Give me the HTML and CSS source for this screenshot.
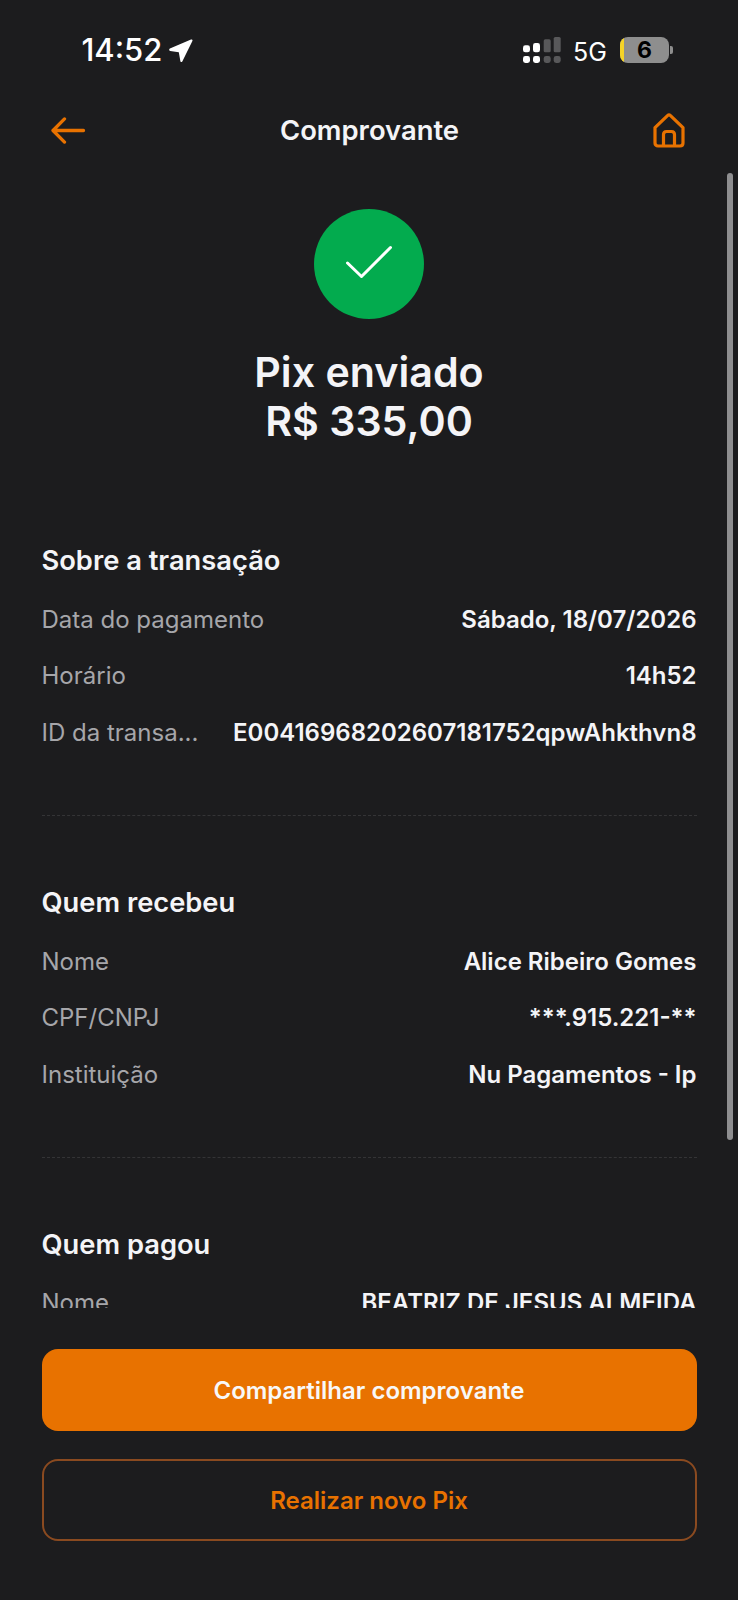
FILE: index.html
```html
<!DOCTYPE html>
<html lang="pt-BR">
<head>
<meta charset="utf-8">
<title>Comprovante</title>
<link rel="stylesheet" href="styles.css">
</head>
<body>
<div class="app">
  <div class="status">
    <div class="status-left">
      <span class="clock">14:52</span>
      <svg class="loc" viewBox="0 0 24 23"><path d="M.9 9.600 22 .5c1-.4 1.800.4 1.400 1.400L13.300 22.400c-.4 1-1.700.9-1.900-.2l-1.600-9L1.200 12C0 11.800-.2 10.200.9 9.600z" fill="#fff"/></svg>
    </div>
    <div class="status-right">
      <svg class="signal" viewBox="0 0 38 26">
        <g fill="#fff">
          <rect x="0" y="8.300" width="7" height="7" rx="2.400"/>
          <rect x="10" y="6" width="7" height="9.300" rx="2.400"/>
          <rect x="0" y="19" width="7" height="7" rx="2.400"/>
          <rect x="10" y="19" width="7" height="7" rx="2.400"/>
        </g>
        <g fill="#58585a">
          <rect x="20.700" y="2.300" width="7" height="13" rx="1.600"/>
          <rect x="30.700" y="0" width="7" height="15.300" rx="1.600"/>
          <rect x="20.700" y="19" width="7" height="7" rx="2.400"/>
          <rect x="30.700" y="19" width="7" height="7" rx="2.400"/>
        </g>
      </svg>
      <span class="net">5G</span>
      <div class="battery">
        <div class="battery-body"><span class="battery-level"></span><span class="battery-num">6</span></div>
        <span class="battery-tip"></span>
      </div>
    </div>
  </div>

  <header class="top">
    <svg class="back" viewBox="0 0 35 27" fill="none" stroke="#e87200" stroke-width="3.300" stroke-linecap="round" stroke-linejoin="round"><path d="M32.500 13.500H2M13.500 1.900 2 13.500l11.500 11.600"/></svg>
    <h1 class="top-title">Comprovante</h1>
    <svg class="home" viewBox="0 0 32 35" fill="none" stroke="#e87200" stroke-width="3.200" stroke-linejoin="round"><path d="M2 14.600 14.500 2.600c.9-.8 2.100-.8 3 0L30 14.600V30c0 1.900-1.200 3-3 3H5c-1.800 0-3-1.100-3-3z"/><path d="M10.500 33V21.600c0-2 1.300-3.100 3-3.100h5c1.700 0 3 1.100 3 3.100V33"/></svg>
  </header>

  <main class="scroll">
    <div class="hero">
      <div class="check">
        <svg class="check-mark" viewBox="0 0 48 35" fill="none" stroke="#fff" stroke-width="3" stroke-linecap="round" stroke-linejoin="round"><path d="M2.500 18 16.500 31.500 45.500 2.500"/></svg>
      </div>
      <h2 class="hero-title">Pix enviado<br>R$ 335,00</h2>
    </div>

    <section class="block">
      <h3 class="block-title">Sobre a transação</h3>
      <div class="row"><span class="label">Data do pagamento</span><span class="value">Sábado, 18/07/2026</span></div>
      <div class="row"><span class="label">Horário</span><span class="value">14h52</span></div>
      <div class="row"><span class="label">ID da transa...</span><span class="value">E00416968202607181752qpwAhkthvn8</span></div>
    </section>

    <section class="block">
      <h3 class="block-title">Quem recebeu</h3>
      <div class="row"><span class="label">Nome</span><span class="value">Alice Ribeiro Gomes</span></div>
      <div class="row"><span class="label">CPF/CNPJ</span><span class="value">***.915.221-**</span></div>
      <div class="row"><span class="label">Instituição</span><span class="value">Nu Pagamentos - Ip</span></div>
    </section>

    <section class="block">
      <h3 class="block-title">Quem pagou</h3>
      <div class="row"><span class="label">Nome</span><span class="value">BEATRIZ DE JESUS ALMEIDA</span></div>
    </section>
  </main>

  <footer class="actions">
    <button class="btn btn-primary">Compartilhar comprovante</button>
    <button class="btn btn-outline">Realizar novo Pix</button>
  </footer>

  <span class="thumb"></span>
</div>
</body>
</html>
```

FILE: styles.css
```css
* { box-sizing: border-box; margin: 0; padding: 0; }

html, body { background: #1c1c1e; }

body {
  font-family: Inter, "Liberation Sans", sans-serif;
  color: #f4f4f7;
}

.app {
  position: relative;
  width: 738px;
  height: 1600px;
  display: flex;
  flex-direction: column;
  overflow: hidden;
}

/* System status bar */
.status {
  height: 88px;
  flex: none;
  display: flex;
  justify-content: space-between;
  align-items: flex-start;
  padding: 37px 65px 0 81.500px;
}

.status-left { display: flex; align-items: center; gap: 7px; margin-top: -2px; }

.clock {
  font-size: 31px;
  line-height: 30px;
  font-weight: 500;
  color: #fff;
}

.loc { width: 24px; height: 23px; }

.status-right { display: flex; align-items: center; }

.signal { width: 38px; height: 26px; }

.net {
  margin-left: 12px;
  width: 34px;
  height: 26px;
  font-size: 25px;
  line-height: 30px;
  color: #fff;
}

.battery { margin-left: 13px; display: flex; align-items: center; gap: 1px; }

.battery-body {
  position: relative;
  width: 49px;
  height: 26px;
  border-radius: 8px;
  background: #8e8e8e;
  overflow: hidden;
  text-align: center;
  font-size: 23px;
  line-height: 26px;
  font-weight: 700;
  color: #000;
}

.battery-level {
  position: absolute;
  left: 0;
  top: 0;
  bottom: 0;
  width: 4px;
  background: #f5d327;
}

.battery-tip {
  width: 3px;
  height: 8px;
  border-radius: 0 2px 2px 0;
  background: #8e8e8e;
}

/* Screen header */
.top {
  height: 86px;
  flex: none;
  display: flex;
  align-items: center;
  justify-content: space-between;
  padding: 0 53px 0 51px;
}

.back { width: 35px; height: 27px; margin-top: -2px; }

.top-title {
  font-size: 27.400px;
  line-height: 32px;
  font-weight: 600;
  margin-top: -3px;
}

.home { width: 32px; height: 35px; margin-top: -2px; }

/* Scrollable receipt */
.scroll {
  flex: 1;
  min-height: 0;
  overflow: hidden;
  padding: 35px 41.500px 0;
}

.hero { display: flex; flex-direction: column; align-items: center; }

.check {
  width: 110px;
  height: 110px;
  border-radius: 50%;
  background: #03ab4e;
  display: flex;
  align-items: center;
  justify-content: center;
}

.check-mark { width: 48px; height: 35px; margin-bottom: 3px; }

.hero-title {
  margin-top: 29px;
  font-size: 41.200px;
  line-height: 49px;
  font-weight: 600;
  text-align: center;
}

.block { padding: 99px 0 0; }

.block + .block {
  margin-top: 54px;
  padding-top: 71px;
  border-top: 1px dashed #343436;
}

.block-title {
  font-size: 27.300px;
  line-height: 32px;
  font-weight: 600;
  margin-bottom: 14px;
}

.row {
  height: 56.600px;
  display: flex;
  align-items: center;
  justify-content: space-between;
  gap: 30px;
  font-size: 24px;
}

.label { color: #a6a6aa; white-space: nowrap; }

.value { font-weight: 600; white-space: nowrap; text-align: right; }

/* Bottom actions */
.actions {
  height: 292px;
  flex: none;
  display: flex;
  flex-direction: column;
  gap: 28px;
  padding: 41px 41.500px 0;
}

.btn {
  height: 82px;
  border-radius: 16px;
  font-family: inherit;
  font-size: 24px;
  font-weight: 600;
}

.btn-primary { background: #e87200; border: 0; color: #f8f8f8; }

.btn-outline {
  background: transparent;
  border: 2px solid #8a4a20;
  color: #e87200;
}

/* Overlay scroll indicator */
.thumb {
  position: absolute;
  left: 727px;
  top: 173px;
  width: 6px;
  height: 967px;
  border-radius: 3px;
  background: #8e8e90;
}
```
